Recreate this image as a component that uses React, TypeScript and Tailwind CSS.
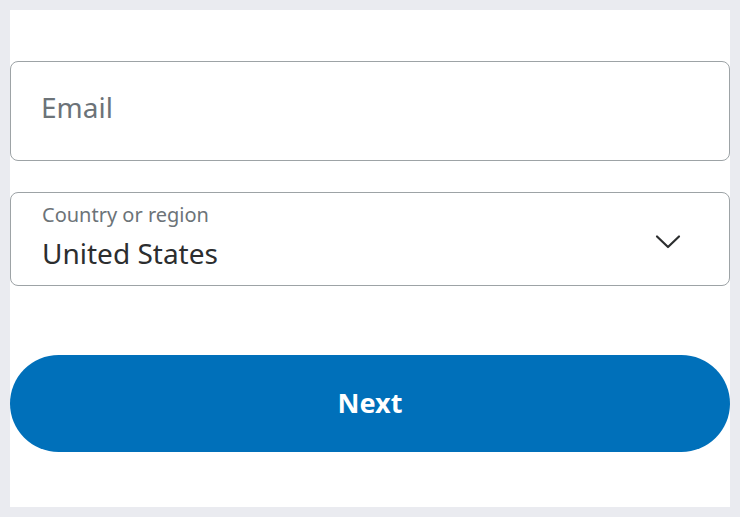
export default function App() {
  return (
    <div className="h-[517px] w-[740px] bg-[#eaebf0] p-[10px]" style={{ fontFamily: '"Noto Sans", Arial, sans-serif' }}>
      <div className="flex h-full flex-col bg-white pt-[51px]">
        {/* Email */}
        <div className="h-[100px] rounded-[8px] border-[1.5px] border-[#9da3a6] px-[30px] pt-[29px]">
          <input
            type="email"
            placeholder="Email"
            className="block h-[32px] w-full bg-transparent text-[28px] leading-[32px] text-[#2c2e2f] outline-none placeholder:text-[#6c7378]"
          />
        </div>

        {/* Country select */}
        <div className="mt-[31px] flex h-[94px] items-start justify-between rounded-[8px] border-[1.5px] border-[#9da3a6] pl-[31px] pr-[48px] pt-[10px]">
          <div className="flex flex-col">
            <span className="text-[20px] leading-[24px] text-[#6c7378]">Country or region</span>
            <span className="mt-[10px] text-[28px] leading-[32px] text-[#2c2e2f]">United States</span>
          </div>
          <svg width="26" height="16" viewBox="0 0 26 16" fill="none" className="mt-[31px]">
            <path d="M2 2.5 L13 13 L24 2.5" stroke="#2c2e2f" strokeWidth="2.2" strokeLinecap="round" strokeLinejoin="round" />
          </svg>
        </div>

        {/* Next */}
        <button className="mt-[69px] h-[97px] w-full rounded-full bg-[#0070ba] text-[27px] font-bold text-white">
          Next
        </button>
      </div>
    </div>
  );
}
